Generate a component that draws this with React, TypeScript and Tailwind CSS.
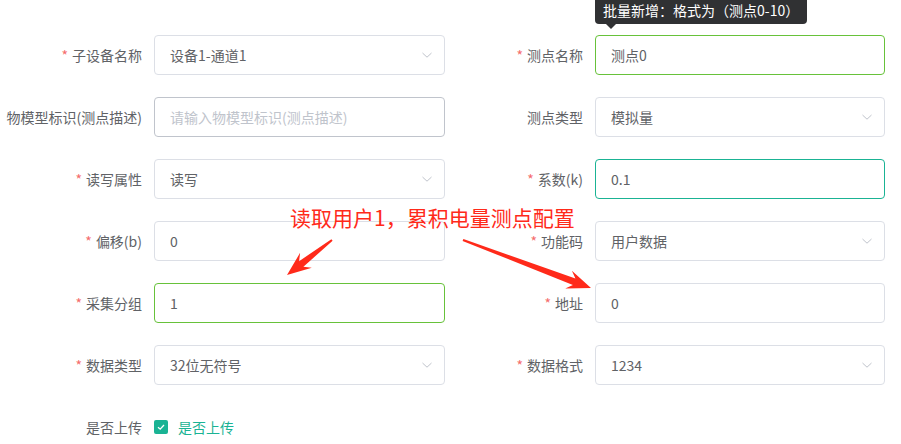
import React from "react";

const FONT = { fontFamily: '"Microsoft YaHei", "Noto Sans CJK SC", "Noto Sans", sans-serif' };

function Chevron() {
  return (
    <svg width="12" height="12" viewBox="0 0 12 12" className="shrink-0">
      <path d="M1.5 4 L6 8.2 L10.5 4" fill="none" stroke="#c0c4cc" strokeWidth="1" />
    </svg>
  );
}

type FieldProps = {
  label: string;
  required?: boolean;
  value?: string;
  placeholder?: string;
  select?: boolean;
  border?: string;
  labelW: string;
  inputW: string;
};

function Field({ label, required, value, placeholder, select, border, labelW, inputW }: FieldProps) {
  return (
    <div className="flex h-10">
      <div className={`${labelW} pr-3 flex items-center justify-end text-sm text-[#606266] whitespace-nowrap`}>
        {required && <span className="text-[#f56c6c] mr-1">*</span>}
        <span>{label}</span>
      </div>
      <div
        className={`${inputW} h-10 rounded border ${border ?? "border-[#dcdfe6]"} bg-white flex items-center pl-[15px] pr-[11px] text-sm`}
      >
        <span className={`flex-1 ${value ? "text-[#606266]" : "text-[#c0c4cc]"}`}>{value ?? placeholder}</span>
        {select && <Chevron />}
      </div>
    </div>
  );
}

function arrow(tx: number, ty: number, px: number, py: number) {
  const dx = px - tx;
  const dy = py - ty;
  const len = Math.hypot(dx, dy);
  const ux = dx / len;
  const uy = dy / len;
  const nx = -uy;
  const ny = ux;
  const L = 20;
  const bx = px - ux * L;
  const by = py - uy * L;
  const w0 = 1;
  const w1 = 7;
  const h = 9.5;
  const nb = 4;
  const pts = [
    [tx + nx * w0, ty + ny * w0],
    [bx + nx * w1 / 2 + ux * 2, by + ny * w1 / 2 + uy * 2],
    [bx + nx * h - ux * nb, by + ny * h - uy * nb],
    [px, py],
    [bx - nx * h - ux * nb, by - ny * h - uy * nb],
    [bx - nx * w1 / 2 + ux * 2, by - ny * w1 / 2 + uy * 2],
    [tx - nx * w0, ty - ny * w0],
  ];
  return pts.map((p) => `${p[0].toFixed(1)},${p[1].toFixed(1)}`).join(" ");
}

export default function App() {
  const L1 = "w-[154px]";
  const I1 = "w-[291px]";
  const L2 = "w-[145px]";
  const I2 = "w-[290px]";
  return (
    <div className="relative w-[901px] h-[444px] bg-white overflow-hidden" style={FONT}>
      <div className="pt-[35px] flex flex-col gap-[22px]">
        <div className="flex">
          <Field labelW={L1} inputW={I1} required label="子设备名称" value="设备1-通道1" select />
          <div className="ml-[5px] relative">
            <Field labelW={L2} inputW={I2} required label="测点名称" value="测点0" border="border-[#67c23a]" />
          </div>
        </div>
        <div className="flex">
          <Field labelW={L1} inputW={I1} label="物模型标识(测点描述)" placeholder="请输入物模型标识(测点描述)" border="border-[#c0c4cc]" />
          <div className="ml-[5px]">
            <Field labelW={L2} inputW={I2} label="测点类型" value="模拟量" select />
          </div>
        </div>
        <div className="flex">
          <Field labelW={L1} inputW={I1} required label="读写属性" value="读写" select />
          <div className="ml-[5px]">
            <Field labelW={L2} inputW={I2} required label="系数(k)" value="0.1" border="border-[#1ab394]" />
          </div>
        </div>
        <div className="flex">
          <Field labelW={L1} inputW={I1} required label="偏移(b)" value="0" />
          <div className="ml-[5px]">
            <Field labelW={L2} inputW={I2} required label="功能码" value="用户数据" select />
          </div>
        </div>
        <div className="flex">
          <Field labelW={L1} inputW={I1} required label="采集分组" value="1" border="border-[#67c23a]" />
          <div className="ml-[5px]">
            <Field labelW={L2} inputW={I2} required label="地址" value="0" />
          </div>
        </div>
        <div className="flex">
          <Field labelW={L1} inputW={I1} required label="数据类型" value="32位无符号" select />
          <div className="ml-[5px]">
            <Field labelW={L2} inputW={I2} required label="数据格式" value="1234" select />
          </div>
        </div>
        <div className="flex h-10 items-center">
          <div className="w-[154px] pr-3 text-right text-sm text-[#606266]">是否上传</div>
          <div className="flex items-center">
            <span className="w-[14px] h-[14px] rounded-[2px] bg-[#1ab394] flex items-center justify-center">
              <svg width="10" height="10" viewBox="0 0 10 10">
                <path d="M2 5.2 L4.2 7.2 L8 3" fill="none" stroke="white" strokeWidth="1.3" />
              </svg>
            </span>
            <span className="pl-[10px] text-sm text-[#1ab394]">是否上传</span>
          </div>
        </div>
      </div>

      {/* tooltip */}
      <div className="absolute left-[595px] top-0 w-[212px] h-6 bg-[#303133] rounded-b-[4px] text-white text-sm leading-5 pl-2 whitespace-nowrap">
        批量新增：格式为（测点0-10）
      </div>
      <div className="absolute left-[606px] top-6 w-0 h-0 border-l-[5px] border-r-[5px] border-t-[5px] border-l-transparent border-r-transparent border-t-[#303133]" />

      {/* annotation */}
      <div className="absolute left-[290px] top-[203px] text-[21px] leading-[28px] text-[#ff2a1a] whitespace-nowrap">
        读取用户1，累积电量测点配置
      </div>
      <svg className="absolute inset-0 pointer-events-none" width="901" height="444">
        <polygon points={arrow(332, 240, 287, 275)} fill="#ff2a1a" />
        <polygon points={arrow(463, 240, 591, 288)} fill="#ff2a1a" />
      </svg>
    </div>
  );
}
